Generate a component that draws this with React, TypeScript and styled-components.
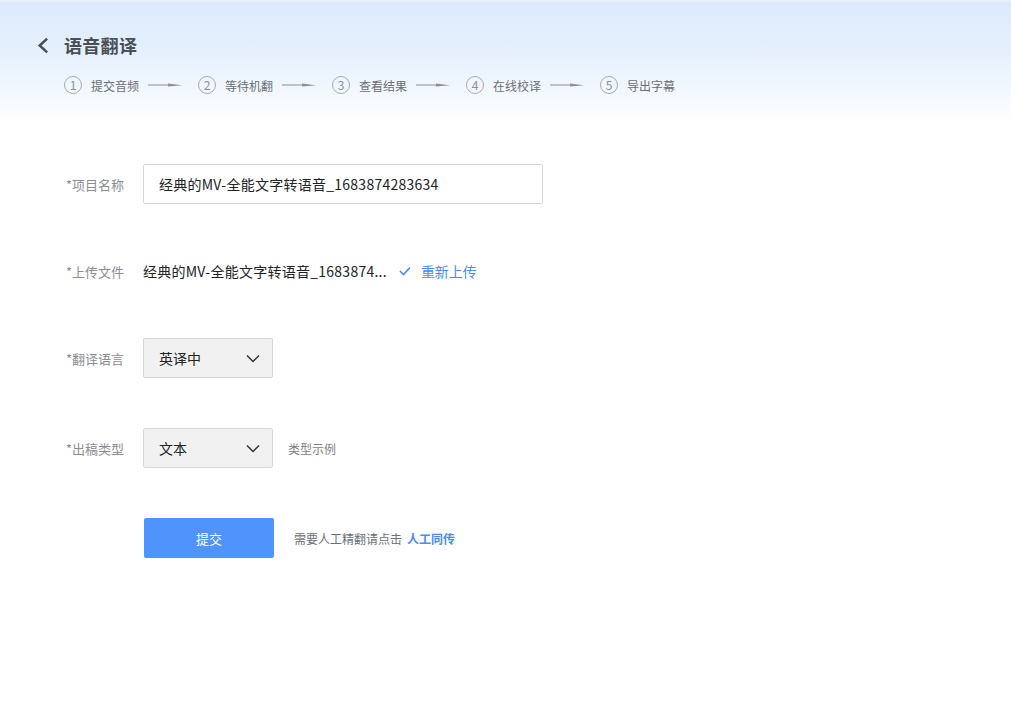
import React from 'react';
import styled, { createGlobalStyle } from 'styled-components';

const GlobalStyle = createGlobalStyle`
    html, body {
        margin: 0;
        padding: 0;
        background: #ffffff;
        font-family: "Noto Sans CJK SC", "Noto Sans", "Liberation Sans", sans-serif;
    }
`

export const Page = styled.div`
    width: 1011px;
    min-height: 710px;
    background: #ffffff;
`

export const Header = styled.div`
    height: 125px;
    border-top: 2px solid #e6eef8;
    box-sizing: border-box;
    background: linear-gradient(180deg, #dbeafd 0%, #e9f2fd 50%, #ffffff 100%);
    padding: 31px 0 0 36px;
`

export const TitleRow = styled.div`
    display: flex;
    align-items: center;
    gap: 11px;
    height: 24px;
`

export const BackIcon = styled.svg`
    width: 17px;
    height: 17px;
`

export const Title = styled.h1`
    margin: 0;
    font-size: 18px;
    font-weight: 700;
    color: #4a4f57;
    letter-spacing: 0.3px;
`

export const Steps = styled.div`
    display: flex;
    align-items: center;
    margin: 18px 0 0 28px;
    height: 20px;
`

export const Step = styled.div`
    display: flex;
    align-items: center;
    width: 134px;
`

export const StepNum = styled.span`
    width: 16px;
    height: 16px;
    border: 1px solid #a8abb0;
    border-radius: 50%;
    display: flex;
    align-items: center;
    justify-content: center;
    font-size: 12px;
    color: #8c9096;
    line-height: 1;
`

export const StepText = styled.span`
    margin-left: 9px;
    font-size: 12px;
    color: #6b6f75;
    width: 49px;
    white-space: nowrap;
`

export const StepArrow = styled.svg`
    margin-left: 8px;
    width: 34px;
    height: 6px;
`

export const Form = styled.div`
    padding: 39px 0 0 66px;
`

export const Row = styled.div<{ gap: number }>`
    display: flex;
    align-items: center;
    height: 40px;
    margin-top: ${p => p.gap}px;
`

export const Label = styled.span`
    width: 77px;
    font-size: 13px;
    color: #8a8d92;
    white-space: nowrap;
`

export const TextInput = styled.div`
    width: 400px;
    height: 40px;
    box-sizing: border-box;
    border: 1px solid #d4d6d9;
    border-radius: 2px;
    display: flex;
    align-items: center;
    padding-left: 15px;
    font-size: 14px;
    letter-spacing: 0.25px;
    color: #222;
`

export const FileName = styled.span`
    font-size: 14px;
    letter-spacing: 0.25px;
    color: #222;
`

export const CheckIcon = styled.svg`
    width: 12px;
    height: 10px;
    margin: 0 10px 0 12px;
`

export const LinkText = styled.span<{ bold?: boolean }>`
    font-size: ${p => (p.bold ? 12 : 14)}px;
    color: #4a8cf0;
    font-weight: ${p => (p.bold ? 700 : 400)};
`

export const Select = styled.div`
    width: 130px;
    height: 40px;
    box-sizing: border-box;
    padding: 0 12px 0 15px;
    background: #f1f1f1;
    border: 1px solid #d7d7d7;
    border-radius: 2px;
    display: flex;
    align-items: center;
    justify-content: space-between;
    font-size: 14px;
    color: #222;
`

export const HintText = styled.span`
    margin-left: 15px;
    font-size: 12px;
    color: #7d8187;
`

export const SubmitButton = styled.button`
    width: 130px;
    height: 40px;
    margin-left: 1px;
    border: none;
    border-radius: 2px;
    background: #4f93fc;
    color: #ffffff;
    font-size: 13px;
    font-family: inherit;
`

export const Tip = styled.span`
    margin-left: 20px;
    font-size: 12px;
    color: #6b6f75;
    display: flex;
    gap: 5px;
`

const steps = ['提交音频', '等待机翻', '查看结果', '在线校译', '导出字幕'];

const Chevron = () => (
    <svg width="14" height="9" viewBox="0 0 14 9">
        <polyline points="1,1.5 7,7.5 13,1.5" fill="none" stroke="#333" strokeWidth="1.5" />
    </svg>
);

const App: React.FC = () => {
    return (
        <>
            <GlobalStyle />
            <Page>
                <Header>
                    <TitleRow>
                        <BackIcon viewBox="0 0 16 16">
                            <polyline points="10.5,1.5 3.5,8 10.5,14.5" fill="none" stroke="#4a4f57" strokeWidth="2.4" />
                        </BackIcon>
                        <Title>语音翻译</Title>
                    </TitleRow>
                    <Steps>
                        {steps.map((s, i) => (
                            <Step key={s}>
                                <StepNum>{i + 1}</StepNum>
                                <StepText>{s}</StepText>
                                {i < steps.length - 1 && (
                                    <StepArrow viewBox="0 0 34 6">
                                        <line x1="0" y1="3" x2="24" y2="3" stroke="#8c9096" strokeWidth="1" />
                                        <polygon points="20,1.6 34,3.2 20,4.4" fill="#8c9096" />
                                    </StepArrow>
                                )}
                            </Step>
                        ))}
                    </Steps>
                </Header>
                <Form>
                    <Row gap={0}>
                        <Label>*项目名称</Label>
                        <TextInput>经典的MV-全能文字转语音_1683874283634</TextInput>
                    </Row>
                    <Row gap={47}>
                        <Label>*上传文件</Label>
                        <FileName>经典的MV-全能文字转语音_1683874...</FileName>
                        <CheckIcon viewBox="0 0 12 10">
                            <polyline points="1,5 4.5,8.5 11,1.5" fill="none" stroke="#4a8cf0" strokeWidth="1.6" />
                        </CheckIcon>
                        <LinkText>重新上传</LinkText>
                    </Row>
                    <Row gap={47}>
                        <Label>*翻译语言</Label>
                        <Select>英译中<Chevron /></Select>
                    </Row>
                    <Row gap={50}>
                        <Label>*出稿类型</Label>
                        <Select>文本<Chevron /></Select>
                        <HintText>类型示例</HintText>
                    </Row>
                    <Row gap={50}>
                        <Label />
                        <SubmitButton>提交</SubmitButton>
                        <Tip>需要人工精翻请点击<LinkText bold>人工同传</LinkText></Tip>
                    </Row>
                </Form>
            </Page>
        </>
    );
}

export default App;
